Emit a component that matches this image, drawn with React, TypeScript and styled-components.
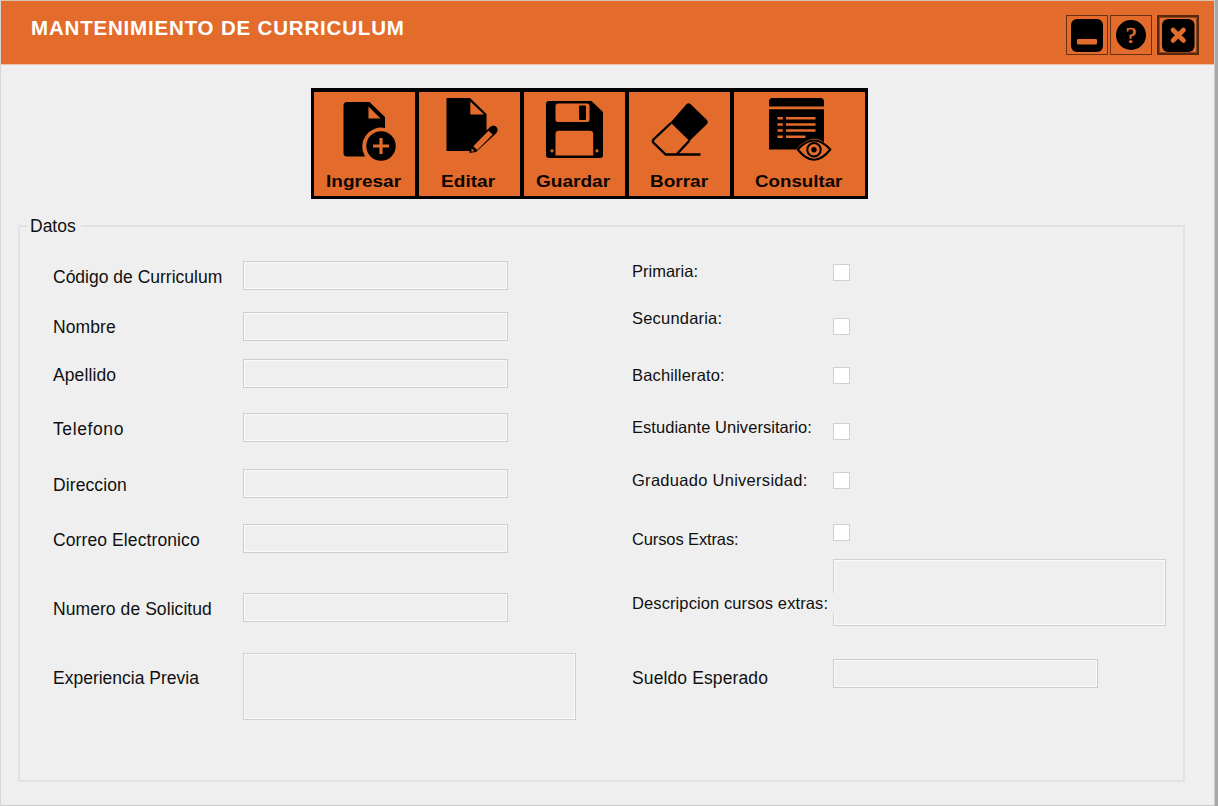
import React from 'react';
import styled, { createGlobalStyle } from 'styled-components';

const ORANGE = '#e36c2d';
const SURFACE = '#efefef';

const GlobalStyle = createGlobalStyle`
  * { box-sizing: border-box; }
  body {
    margin: 0;
    background: #a9a9a9;
    font-family: "Liberation Sans", Arial, sans-serif;
    color: #101010;
    overflow: hidden;
  }
`;

const Window = styled.main`
  width: 1215px;
  height: 806px;
  display: flex;
  flex-direction: column;
  background: ${SURFACE};
  border: 1px solid #c9c9c9;
  border-left-color: #dcd6d2;
  border-top-color: #d9c6ba;
`;

const TitleBar = styled.header`
  height: 64px;
  flex: none;
  display: flex;
  align-items: flex-start;
  justify-content: space-between;
  padding: 14px 15px 0 30px;
  background: ${ORANGE};
  border-bottom: 1px solid #eebfa5;
`;

const Title = styled.h1`
  margin: 0;
  padding-top: 1px;
  font-size: 20.5px;
  line-height: 24px;
  font-weight: 700;
  letter-spacing: 0.82px;
  color: #fff;
  white-space: nowrap;
`;

const WindowControls = styled.div`
  display: flex;
`;

const ControlButton = styled.button<{ $strong?: boolean; $gap?: number }>`
  width: 42px;
  height: 40px;
  margin: 0 0 0 ${(p) => p.$gap ?? 0}px;
  padding: 0;
  display: flex;
  align-items: center;
  justify-content: center;
  background: ${ORANGE};
  border: ${(p) => (p.$strong ? '2px solid #57280d' : '1px solid #6a3213')};
  box-shadow: ${(p) => (p.$strong ? 'inset 0 0 0 1px #8f4519' : 'none')};

  svg { flex: none; display: block; }
`;

const Toolbar = styled.nav`
  width: 557px;
  height: 111px;
  flex: none;
  display: flex;
  gap: 4px;
  margin: 23px 0 0 310px;
  padding: 4px 3px 3px;
  background: #000;
`;

const ToolButton = styled.button<{ $width?: number }>`
  width: ${(p) => p.$width ?? 101}px;
  height: 104px;
  display: flex;
  flex-direction: column;
  align-items: center;
  padding: 0;
  border: 0;
  background: ${ORANGE};
  color: #000;
  font-family: inherit;

  svg { flex: none; display: block; }
`;

const ToolLabel = styled.span<{ $scale: number }>`
  margin: 3px 2px 0 0;
  font-size: 17px;
  line-height: 20px;
  font-weight: 700;
  color: #0c0400;
  transform: scaleX(${(p) => p.$scale});
`;

const Group = styled.fieldset`
  width: 1167px;
  height: 566px;
  margin: 17px 0 0 17px;
  padding: 0 0 0 33px;
  display: flex;
  min-width: 0;
  border: 2px solid #e2e2e2;
`;

const Legend = styled.legend`
  margin-left: -26px;
  padding: 0 5px 0 3px;
  font-size: 17.5px;
  line-height: 20px;
`;

const Column = styled.div<{ $width: number }>`
  width: ${(p) => p.$width}px;
  display: flex;
  flex-direction: column;
`;

const Row = styled.div<{ $height: number }>`
  height: ${(p) => p.$height}px;
  flex: none;
  display: flex;
  align-items: flex-start;
`;

const Label = styled.label<{ $width: number; $top: number; $size?: number; $spacing?: number }>`
  width: ${(p) => p.$width}px;
  flex: none;
  padding-top: ${(p) => p.$top}px;
  font-size: ${(p) => p.$size ?? 17.5}px;
  letter-spacing: ${(p) => p.$spacing ?? 0}px;
  line-height: 20px;
  white-space: nowrap;
`;

/* Opaque caption whose background runs over the left edge of the field beside it. */
const OverlapLabel = styled(Label)`
  position: relative;
  z-index: 1;
  margin: ${(p) => p.$top}px -2px 0 0;
  padding-top: 0;
  background: ${SURFACE};
`;

const Field = styled.input`
  width: 265px;
  height: 29px;
  margin: 0;
  padding: 0 6px;
  border: 1px solid #cdcdcd;
  border-radius: 0;
  background: ${SURFACE};
  box-shadow: inset 0 0 0 1px #fafafa;
`;

const Area = styled.textarea`
  width: 333px;
  height: 67px;
  margin: 0;
  padding: 6px;
  resize: none;
  border: 1px solid #cfcfcf;
  border-radius: 0;
  background: ${SURFACE};
  box-shadow: inset 0 0 0 1px #fafafa;
`;

const Check = styled.input.attrs({ type: 'checkbox' })<{ $top?: number }>`
  appearance: none;
  width: 17px;
  height: 17px;
  margin: ${(p) => p.$top ?? 0}px 0 0;
  border: 1px solid #d0d0d0;
  background: #fff;
`;

const MinimizeIcon = () => (
  <svg width="36" height="36" viewBox="0 0 36 36">
    <rect x="2" y="2" width="32" height="33" rx="6" />
    <rect x="8" y="22" width="20" height="5.500" rx="1" fill={ORANGE} />
  </svg>
);

const HelpGlyph = styled.span`
  width: 30px;
  height: 30px;
  border-radius: 50%;
  background: #000;
  color: ${ORANGE};
  font: 400 24px/30px "Liberation Serif", serif;
  -webkit-text-stroke: 0.6px ${ORANGE};
  text-align: center;
`;

const CloseIcon = () => (
  <svg width="36" height="36" viewBox="0 0 36 36">
    <rect x="2" y="2" width="32.500" height="33" rx="6" />
    <path d="M13 13L23.500 23.500M23.500 13L13 23.500" stroke={ORANGE} strokeWidth="4.600" strokeLinecap="round" />
  </svg>
);

const AddIcon = () => (
  <svg width="101" height="77" viewBox="0 0 101 77">
    <path d="M33 10H55.500L71 25V36A19 19 0 0 0 51 64.500H33Q29.500 64.500 29.500 61V13.500Q29.500 10 33 10Z" />
    <path d="M54.500 14.500L66.500 26.500H54.500Z" fill={ORANGE} />
    <circle cx="67" cy="54" r="14.700" />
    <path d="M67 46V62M59 54H75" stroke={ORANGE} strokeWidth="3.200" />
  </svg>
);

const EditIcon = () => (
  <svg width="101" height="77" viewBox="0 0 101 77">
    <path d="M27.500 6H51L67.500 22V42L56 59H27.500Z" />
    <path d="M51.300 9.500L65 22.500H51.300Z" fill={ORANGE} />
    <path d="M51 55L71 35Q74.500 31.800 77.500 35Q80 38 77 41.500L57 60L50.500 61Z" />
    <path d="M54.300 54.200L69.500 38.800L73.700 42.500L58.300 58Z" fill={ORANGE} />
    <path d="M52.700 56.500L55.300 59.200L52.300 59.500Z" fill={ORANGE} />
  </svg>
);

const SaveIcon = () => (
  <svg width="101" height="77" viewBox="0 0 101 77">
    <path d="M25 9H67.500L79 20V63Q79 66 76 66H25Q22 66 22 63V12Q22 9 25 9Z" />
    <rect x="31.500" y="11.500" width="34" height="18.500" rx="2.500" fill={ORANGE} />
    <rect x="55" y="13.500" width="7" height="14.500" rx="1" />
    <path d="M31.500 63.500V42Q31.500 38.800 34.700 38.800H66Q69.200 38.800 69.200 42V63.500Z" fill={ORANGE} />
    <circle cx="28" cy="58.800" r="1.600" fill={ORANGE} />
    <circle cx="73" cy="58.800" r="1.600" fill={ORANGE} />
  </svg>
);

const EraserIcon = () => (
  <svg width="101" height="77" viewBox="0 0 101 77">
    <path d="M41.500 30.500L57.500 12.200Q59.500 10.200 61.700 12.200L78 28Q79.700 30 78 32L60.500 49Z" />
    <path d="M42 31L24.500 47.500Q23.200 49.200 24.500 50.800L36.700 62.500H47.500L60.500 48.500M36.500 62.500H71.500" fill="none" stroke="#000" strokeWidth="2.400" />
  </svg>
);

const QueryIcon = () => (
  <svg width="130" height="77" viewBox="0 0 130 77">
    <path d="M34 14.500V9.500Q34 6 37.500 6H85.500Q89 6 89 9.500V14.500Z" />
    <path d="M34 17.200H89V57.500H34Z" />
    <path
      d="M42.500 26.300H47.800M51 26.300H80.500M42.500 32.400H47.800M51 32.400H80.500M42.500 38.600H47.800M51 38.600H80.500M42.500 44.800H47.800M51 44.800H70.500"
      stroke={ORANGE}
      strokeWidth="2.500"
    />
    <path d="M61 57.500Q70 46.800 79 46.800Q88 46.800 97 57.500Q88 69.500 79 69.500Q70 69.500 61 57.500Z" fill={ORANGE} />
    <path d="M62.700 57.500Q71 48.600 79 48.600Q87 48.600 95.300 57.500Q87 67.800 79 67.800Q71 67.800 62.700 57.500Z" fill={ORANGE} stroke="#000" strokeWidth="2" />
    <circle cx="79" cy="57.700" r="6.700" fill="none" stroke="#000" strokeWidth="2" />
    <circle cx="79" cy="57.700" r="2.700" />
  </svg>
);

const tools = [
  { name: 'Ingresar', icon: <AddIcon />, scale: 1.12 },
  { name: 'Editar', icon: <EditIcon />, scale: 1.12 },
  { name: 'Guardar', icon: <SaveIcon />, scale: 1.12 },
  { name: 'Borrar', icon: <EraserIcon />, scale: 1.12 },
  { name: 'Consultar', icon: <QueryIcon />, scale: 1.1, width: 131 },
];

const personal = [
  { name: 'Código de Curriculum', height: 51, top: 6, spacing: 0 },
  { name: 'Nombre', height: 47, top: 5, spacing: 0.1 },
  { name: 'Apellido', height: 54, top: 6, spacing: 0.1 },
  { name: 'Telefono', height: 56, top: 6, spacing: 0.6 },
  { name: 'Direccion', height: 55, top: 6, spacing: 0.1 },
  { name: 'Correo Electronico', height: 69, top: 6, spacing: 0.1 },
  { name: 'Numero de Solicitud', height: 60, top: 6, spacing: 0.07 },
];

const studies = [
  { name: 'Primaria:', height: 47, top: 0, check: 3, spacing: 0 },
  { name: 'Secundaria:', height: 56, top: 0, check: 10, spacing: 0.2 },
  { name: 'Bachillerato:', height: 53, top: 1, check: 3, spacing: 0.15 },
  { name: 'Estudiante Universitario:', height: 53, top: 0, check: 6, spacing: 0.04 },
  { name: 'Graduado Universidad:', height: 54, top: 0, check: 2, spacing: 0.28 },
  { name: 'Cursos Extras:', height: 35, top: 5, check: 0, spacing: -0.12 },
];

export default function App() {
  return (
    <>
      <GlobalStyle />
      <Window>
        <TitleBar>
          <Title>MANTENIMIENTO DE CURRICULUM</Title>
          <WindowControls>
            <ControlButton aria-label="Minimizar"><MinimizeIcon /></ControlButton>
            <ControlButton aria-label="Ayuda" $gap={2}><HelpGlyph>?</HelpGlyph></ControlButton>
            <ControlButton aria-label="Cerrar" $gap={5} $strong><CloseIcon /></ControlButton>
          </WindowControls>
        </TitleBar>
        <Toolbar>
          {tools.map((t) => (
            <ToolButton key={t.name} $width={t.width}>
              {t.icon}
              <ToolLabel $scale={t.scale}>{t.name}</ToolLabel>
            </ToolButton>
          ))}
        </Toolbar>
        <Group>
          <Legend>Datos</Legend>
          <Column $width={579}>
            <Row $height={25} />
            {personal.map((f) => (
              <Row key={f.name} $height={f.height}>
                <Label $width={190} $top={f.top} $spacing={f.spacing}>{f.name}</Label>
                <Field disabled />
              </Row>
            ))}
            <Row $height={67}>
              <Label $width={190} $top={15}>Experiencia Previa</Label>
              <Area disabled />
            </Row>
          </Column>
          <Column $width={534}>
            <Row $height={25} />
            {studies.map((s) => (
              <Row key={s.name} $height={s.height}>
                <Label $width={201} $top={s.top} $size={16.5} $spacing={s.spacing}>{s.name}</Label>
                <Check $top={s.check} disabled />
              </Row>
            ))}
            <Row $height={100}>
              <OverlapLabel $width={203} $top={34} $size={16.5} $spacing={0.1}>Descripcion cursos extras:</OverlapLabel>
              <Area disabled />
            </Row>
            <Row $height={29}>
              <Label $width={201} $top={9} $spacing={0.12}>Sueldo Esperado</Label>
              <Field disabled />
            </Row>
          </Column>
        </Group>
      </Window>
    </>
  );
}
